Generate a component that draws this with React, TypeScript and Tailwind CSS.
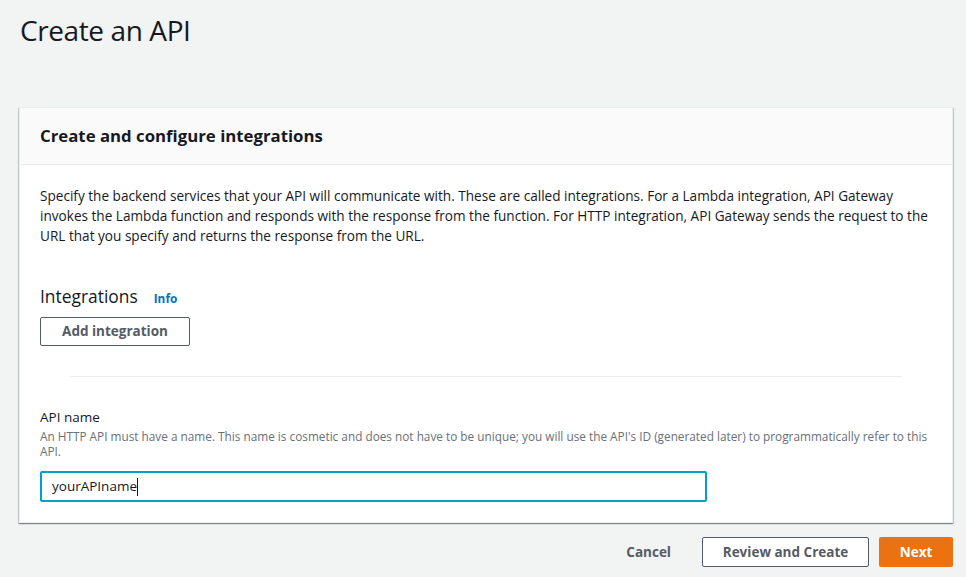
import React from "react";

export default function App() {
  return (
    <div
      className="w-[966px] h-[577px] bg-[#f2f3f3] overflow-hidden text-[#16191f]"
      style={{ fontFamily: '"Open Sans", "Noto Sans", Arial, sans-serif' }}
    >
      <div className="pl-[20px] pr-[13px]">
        <h1 className="pt-[12px] text-[28px] leading-[36px] font-normal text-[#16191f] tracking-[-0.4px]">
          Create an API
        </h1>
        <div className="mt-[59px] ml-[-1px] bg-white border border-[#eaeded] shadow-[0_1px_1px_0_rgba(0,28,36,0.3),1px_1px_1px_0_rgba(0,28,36,0.15),-1px_1px_1px_0_rgba(0,28,36,0.15)]">
          <div className="h-[57px] bg-[#fafafa] border-b border-[#eaeded] px-[20px] flex items-center">
            <h2 className="text-[16.8px] font-bold leading-[22px] text-[#16191f]">
              Create and configure integrations
            </h2>
          </div>
          <div className="px-[20px] pt-[21px] pb-[20px]">
            <p className="text-[13.6px] leading-[20px] text-[#16191f]">
              Specify the backend services that your API will communicate with. These are called integrations. For a Lambda integration, API Gateway invokes the Lambda function and responds with the response from the function. For HTTP integration, API Gateway sends the request to the URL that you specify and returns the response from the URL.
            </p>
            <div className="mt-[38px] flex items-baseline gap-[16px]">
              <h3 className="text-[17.4px] leading-[24px] font-normal">Integrations</h3>
              <span className="text-[11.8px] font-bold text-[#0073bb]">Info</span>
            </div>
            <button className="mt-[9px] h-[29px] w-[150px] border border-[#545b64] rounded-[2px] bg-white text-[13.5px] font-bold text-[#545b64]">
              Add integration
            </button>
            <div className="mt-[30px] mx-[30px] border-t border-[#eaeded]" />
            <div className="mt-[30px] text-[13.5px] leading-[20px]">API name</div>
            <p className="mt-[2px] text-[11.8px] leading-[15px] text-[#687078]">
              An HTTP API must have a name. This name is cosmetic and does not have to be unique; you will use the API's ID (generated later) to programmatically refer to this API.
            </p>
            <div className="mt-[12px] w-[667px] h-[31px] border-2 border-[#00a1c9] rounded-[2px] flex items-center pl-[10px] text-[13.5px]">
              <span>yourAPIname</span>
              <span className="inline-block w-[1px] h-[18px] bg-[#16191f]" />
            </div>
          </div>
        </div>
        <div className="mt-[14px] flex justify-end items-center">
          <span className="text-[13.5px] font-bold text-[#545b64] mr-[31px]">Cancel</span>
          <button className="h-[30px] w-[167px] border border-[#545b64] rounded-[2px] bg-white text-[13.5px] font-bold text-[#545b64]">
            Review and Create
          </button>
          <button className="ml-[10px] h-[30px] w-[74px] rounded-[2px] bg-[#ec7211] text-[13.5px] font-bold text-white">
            Next
          </button>
        </div>
      </div>
    </div>
  );
}
